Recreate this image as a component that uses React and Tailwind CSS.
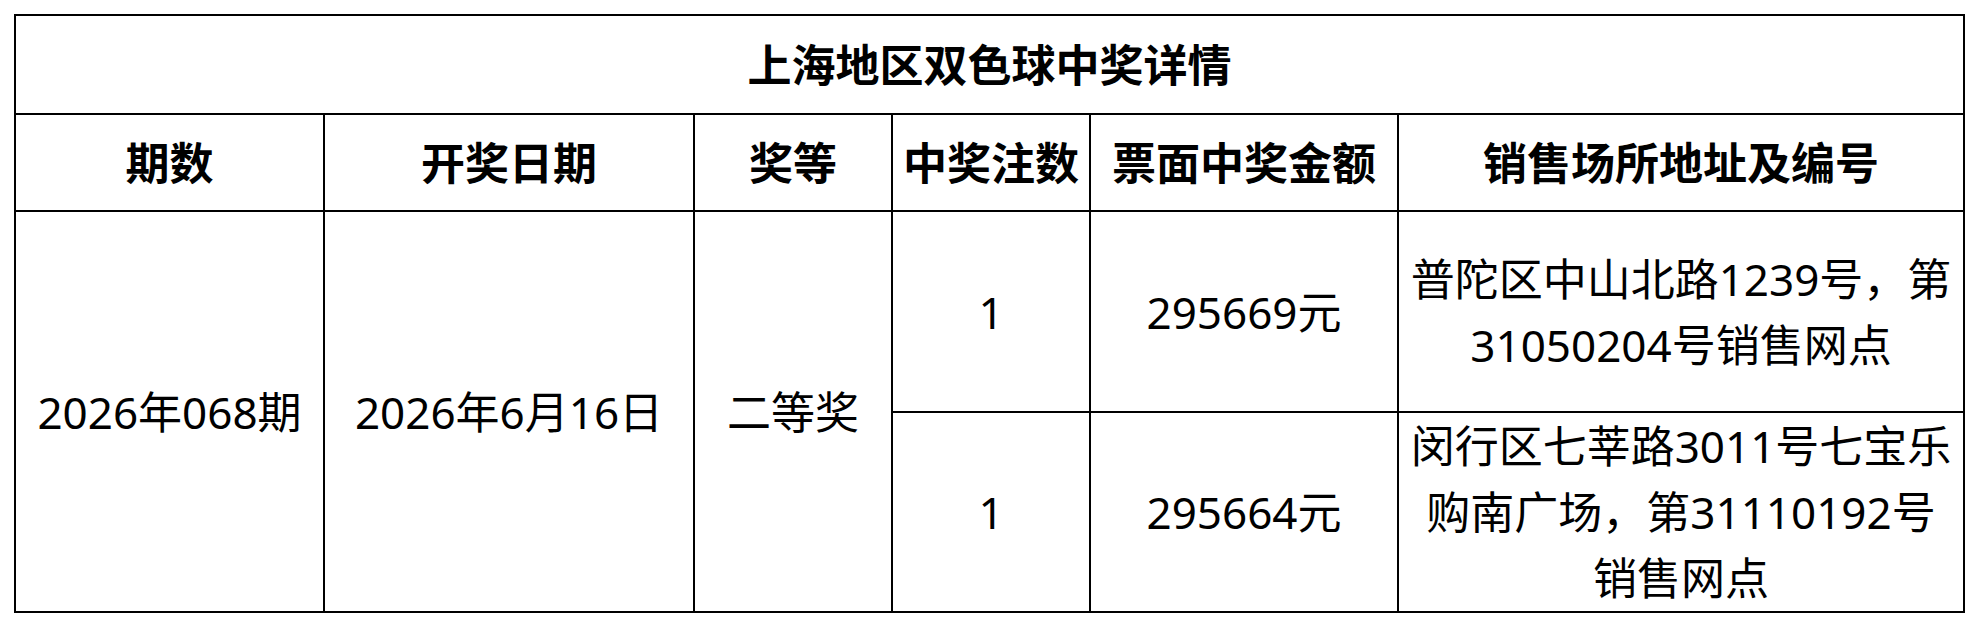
import React from "react";

const cell = "border-2 border-black text-center align-middle p-0";

export default function App() {
  return (
    <div
      className="w-[1980px] h-[628px] bg-white text-black pt-[14px] pl-[14px]"
      style={{ fontFamily: '"Noto Sans", "Noto Sans CJK SC", sans-serif' }}
    >
      <table className="border-collapse table-fixed w-[1951px] text-[44px] leading-[66px]">
        <colgroup>
          <col className="w-[309px]" />
          <col className="w-[370px]" />
          <col className="w-[198px]" />
          <col className="w-[198px]" />
          <col className="w-[308px]" />
          <col className="w-[566px]" />
        </colgroup>
        <tbody>
          <tr className="h-[99px]">
            <td colSpan={6} className={`${cell} font-bold`}>上海地区双色球中奖详情</td>
          </tr>
          <tr className="h-[97px] font-bold">
            <td className={cell}>期数</td>
            <td className={cell}>开奖日期</td>
            <td className={cell}>奖等</td>
            <td className={`${cell} whitespace-nowrap`}>中奖注数</td>
            <td className={`${cell} whitespace-nowrap`}>票面中奖金额</td>
            <td className={cell}>销售场所地址及编号</td>
          </tr>
          <tr className="h-[201px]">
            <td rowSpan={2} className={`${cell} whitespace-nowrap`}>2026年068期</td>
            <td rowSpan={2} className={`${cell} whitespace-nowrap`}>2026年6月16日</td>
            <td rowSpan={2} className={cell}>二等奖</td>
            <td className={cell}>1</td>
            <td className={cell}>295669元</td>
            <td className={`${cell} whitespace-nowrap`}>
              <div>普陀区中山北路1239号，第</div>
              <div>31050204号销售网点</div>
            </td>
          </tr>
          <tr className="h-[200px]">
            <td className={cell}>1</td>
            <td className={cell}>295664元</td>
            <td className={`${cell} whitespace-nowrap`}>
              <div>闵行区七莘路3011号七宝乐</div>
              <div>购南广场，第31110192号</div>
              <div>销售网点</div>
            </td>
          </tr>
        </tbody>
      </table>
    </div>
  );
}
